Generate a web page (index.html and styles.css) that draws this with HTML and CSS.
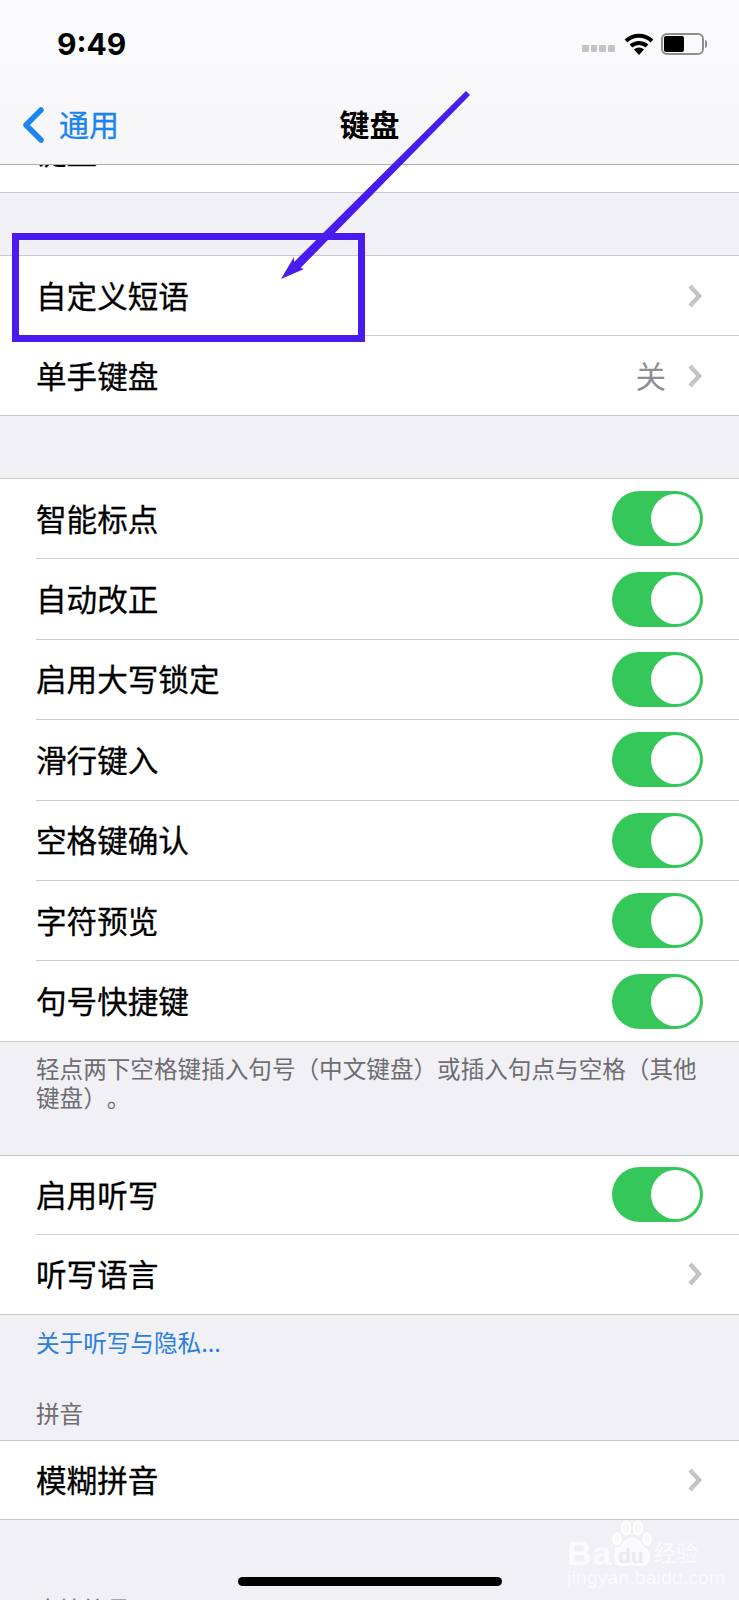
FILE: index.html
```html
<!DOCTYPE html>
<html>
<head>
    <title>键盘</title>
    <link rel="stylesheet" href="styles.css">
</head>
<body>
<div class="phone">
    <header class="top">
        <div class="status">
            <span class="time">9:49</span>
            <div class="status-icons">
                <div class="signal"><i></i><i></i><i></i><i></i></div>
                <svg class="wifi" width="30" height="22" viewBox="0 0 30 22">
                    <path d="M2 8 A19 19 0 0 1 28 8" fill="none" stroke="#000" stroke-width="4"/>
                    <path d="M7 13 A12 12 0 0 1 23 13" fill="none" stroke="#000" stroke-width="4"/>
                    <path d="M10 16.5 L15 22 L20 16.5 A7 7 0 0 0 10 16.5 Z" fill="#000"/>
                </svg>
                <div class="battery"><div class="battery-fill"></div></div>
                <div class="battery-cap"></div>
            </div>
        </div>
        <nav class="nav">
            <a class="back">
                <svg width="24" height="36" viewBox="0 0 24 36"><path d="M20 3 L5 18 L20 33" fill="none" stroke="#1a84f0" stroke-width="5.5" stroke-linecap="round" stroke-linejoin="round"/></svg>
                <span>通用</span>
            </a>
            <h1>键盘</h1>
        </nav>
    </header>

    <section class="group first">
        <div class="row clipped"><span>键盘</span><span class="count">3</span></div>
    </section>

    <section class="group gap-62">
        <div class="row">
            <span>自定义短语</span>
            <svg class="chev" width="16" height="24" viewBox="0 0 16 24"><path d="M3 2 L12 12 L3 22" fill="none" stroke="#c4c4c7" stroke-width="4.5"/></svg>
        </div>
        <div class="row">
            <span>单手键盘</span>
            <span class="value">关</span>
            <svg class="chev" width="16" height="24" viewBox="0 0 16 24"><path d="M3 2 L12 12 L3 22" fill="none" stroke="#c4c4c7" stroke-width="4.5"/></svg>
        </div>
    </section>

    <section class="group gap-62">
        <div class="row"><span>智能标点</span><div class="toggle"><div class="knob"></div></div></div>
        <div class="row"><span>自动改正</span><div class="toggle"><div class="knob"></div></div></div>
        <div class="row"><span>启用大写锁定</span><div class="toggle"><div class="knob"></div></div></div>
        <div class="row"><span>滑行键入</span><div class="toggle"><div class="knob"></div></div></div>
        <div class="row"><span>空格键确认</span><div class="toggle"><div class="knob"></div></div></div>
        <div class="row"><span>字符预览</span><div class="toggle"><div class="knob"></div></div></div>
        <div class="row"><span>句号快捷键</span><div class="toggle"><div class="knob"></div></div></div>
    </section>
    <p class="note">轻点两下空格键插入句号（中文键盘）或插入句点与空格（其他键盘）。</p>

    <section class="group tight">
        <div class="row"><span>启用听写</span><div class="toggle"><div class="knob"></div></div></div>
        <div class="row">
            <span>听写语言</span>
            <svg class="chev" width="16" height="24" viewBox="0 0 16 24"><path d="M3 2 L12 12 L3 22" fill="none" stroke="#c4c4c7" stroke-width="4.5"/></svg>
        </div>
    </section>
    <p class="link">关于听写与隐私...</p>

    <p class="section-title">拼音</p>
    <section class="group tight">
        <div class="row">
            <span>模糊拼音</span>
            <svg class="chev" width="16" height="24" viewBox="0 0 16 24"><path d="M3 2 L12 12 L3 22" fill="none" stroke="#c4c4c7" stroke-width="4.5"/></svg>
        </div>
    </section>
    <p class="section-title last">表情符号</p>

    <!-- annotation drawn over the screenshot -->
    <div class="mark-box"></div>
    <svg class="mark-arrow" width="739" height="300" viewBox="0 0 739 300">
        <path d="M466 91 L470 95 L300.500 268 L304 269 L281 279 L294 257 L294 262 Z" fill="#4a1bee"/>
    </svg>

    <div class="home-bar"></div>

    <div class="watermark">
        <svg class="paw" width="40" height="48" viewBox="0 0 40 48">
            <g fill="#f9f9fc" stroke="#fff" stroke-width="1.5">
                <ellipse cx="14" cy="8" rx="4.5" ry="7"/>
                <ellipse cx="26" cy="8" rx="4.5" ry="7"/>
                <ellipse cx="5" cy="19" rx="4" ry="6"/>
                <ellipse cx="35" cy="19" rx="4" ry="6"/>
                <path d="M20 19 C28 19 30 27 35 31 C40 37 36 46 28 45 C24 44.500 16 44.500 12 45 C4 46 0 37 5 31 C10 27 12 19 20 19 Z"/>
            </g>
        </svg>
        <div class="wm-logo">Bai</div>
        <div class="wm-du">du</div>
        <div class="wm-cn">经验</div>
        <div class="wm-url">jingyan.baidu.com</div>
    </div>
</div>
</body>
</html>
```
FILE: styles.css
```css
* {
    box-sizing: border-box;
}

body {
    margin: 0;
    background: #f0f0f5;
    font-family: "Noto Sans CJK SC", "Liberation Sans", sans-serif;
    color: #000;
}

.phone {
    position: relative;
    width: 739px;
    height: 1600px;
    overflow: hidden;
    background: #f0f0f5;
}

/* status bar + nav */
.top {
    height: 165px;
    background: linear-gradient(#fbfbfd, #f6f6f8);
    border-bottom: 1px solid #aeaeb2;
}

.status {
    height: 88px;
    display: flex;
    justify-content: space-between;
    align-items: center;
    padding: 0 32px 0 57px;
}

.time {
    font-family: Inter, "Liberation Sans", sans-serif;
    font-size: 30px;
    font-weight: 700;
}

.status-icons {
    display: flex;
    align-items: center;
}

.signal {
    display: flex;
    gap: 2px;
    margin-top: 9px;
    margin-right: 9px;
}

.signal i {
    width: 6.800px;
    height: 7px;
    background: #c4c4c6;
    border-radius: 1px;
}

.wifi {
    margin-right: 7px;
}

.battery {
    width: 43px;
    height: 22px;
    border: 2px solid #8e8e90;
    border-radius: 6px;
    padding: 1px;
}

.battery-fill {
    width: 20px;
    height: 100%;
    background: #000;
    border-radius: 2px;
}

.battery-cap {
    width: 2px;
    height: 8px;
    margin-left: 1px;
    background: #8e8e90;
    border-radius: 0 2px 2px 0;
}

.nav {
    height: 76px;
    position: relative;
    display: flex;
    align-items: center;
    justify-content: center;
}

.nav h1 {
    margin: 0 0 6px;
    font-size: 30px;
    font-weight: 700;
    line-height: 1;
}

.back {
    position: absolute;
    left: 21px;
    top: 19px;
    display: flex;
    align-items: center;
    gap: 14px;
    color: #1a84f0;
    font-size: 30px;
    -webkit-text-stroke: 0.3px #1a84f0;
    line-height: 36px;
}

.back span {
    margin-top: -5px;
}

/* settings groups */
.group {
    background: #fff;
    border-top: 1px solid #c9c9cc;
    border-bottom: 1px solid #c9c9cc;
}

.group.first {
    border-top: 0;
}

.gap-62 {
    margin-top: 62px;
}

.row {
    height: 80.400px;
    margin-left: 36px;
    padding-right: 36px;
    padding-bottom: 2px;
    display: flex;
    align-items: center;
    font-size: 30.600px;
    -webkit-text-stroke: 0.3px #000;
    line-height: 40px;
    border-top: 1px solid #cfcfd2;
}

.row:first-child {
    height: 79px;
    border-top: 0;
}

.tight .row:first-child {
    height: 78px;
}

.row > span:first-child {
    flex: 1;
}

.row .toggle,
.row .chev {
    position: relative;
    top: 1px;
}

.row.clipped {
    height: 27px;
    padding-bottom: 0;
    overflow: hidden;
    align-items: flex-end;
}

.clipped span {
    position: relative;
    top: -12px;
    height: 58px;
    flex: none;
    line-height: 58px;
}

.clipped .count {
    margin-right: 38px;
    font-family: "Liberation Sans", sans-serif;
    color: #8e8e93;
    -webkit-text-stroke: 0;
    top: -10px;
}

.value {
    color: #8e8e93;
    -webkit-text-stroke: 0;
    margin-right: 21px;
}

.toggle {
    width: 91px;
    height: 55px;
    padding: 3px;
    display: flex;
    justify-content: flex-end;
    background: #35c759;
    border-radius: 28px;
}

.knob {
    width: 49px;
    height: 49px;
    background: #fff;
    border-radius: 50%;
}

.note {
    margin: 0;
    height: 113px;
    padding: 12px 36px 0;
    font-size: 23.600px;
    line-height: 29.500px;
    color: #6d6d72;
    text-spacing-trim: space-all;
}

.link {
    margin: 0;
    height: 60px;
    padding: 8px 36px 0;
    font-size: 23.600px;
    line-height: 38px;
    color: #2a7de1;
}

.section-title {
    margin: 0;
    height: 64.500px;
    padding: 18.500px 36px 0;
    font-size: 23.600px;
    line-height: 38px;
    color: #6d6d72;
}

.section-title.last {
    height: 80px;
    padding-top: 70px;
}

/* purple annotation */
.mark-box {
    position: absolute;
    left: 12px;
    top: 233px;
    width: 353px;
    height: 109px;
    border: 7px solid #4a1bee;
}

.mark-arrow {
    position: absolute;
    left: 0;
    top: 0;
}

.home-bar {
    position: absolute;
    left: 238px;
    top: 1577px;
    width: 264px;
    height: 9px;
    background: #000;
    border-radius: 5px;
}

/* baidu jingyan watermark */
.watermark {
    position: absolute;
    left: 566px;
    top: 1520px;
    width: 135px;
    height: 80px;
    color: #fbfbfe;
}

.paw {
    position: absolute;
    left: 46px;
    top: 0;
}

.wm-logo {
    position: absolute;
    left: 1px;
    top: 14px;
    font-family: "Liberation Sans", sans-serif;
    font-size: 34px;
    font-weight: 700;
    letter-spacing: 1px;
}

.wm-du {
    position: absolute;
    left: 52px;
    top: 24px;
    font-family: "Liberation Sans", sans-serif;
    font-size: 21px;
    font-weight: 700;
    color: #e9e9ee;
}

.wm-cn {
    position: absolute;
    left: 88px;
    top: 16px;
    font-size: 22px;
    line-height: 30px;
}

.wm-url {
    position: absolute;
    left: 1px;
    top: 47px;
    font-family: "Liberation Sans", sans-serif;
    font-size: 19px;
    letter-spacing: 0.3px;
    white-space: nowrap;
}
```
